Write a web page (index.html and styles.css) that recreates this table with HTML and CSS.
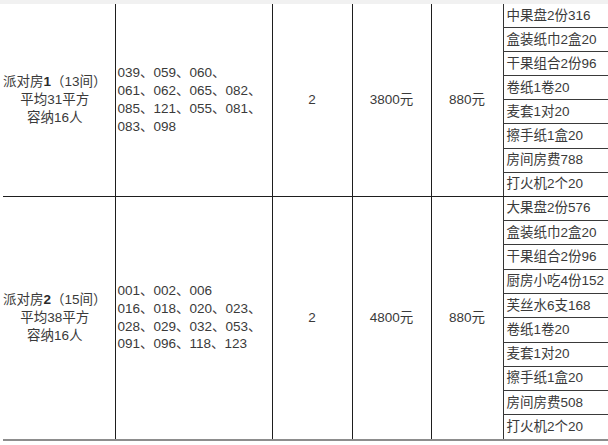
FILE: index.html
```html
<!DOCTYPE html>
<html lang="zh-CN">
<head>
<meta charset="utf-8">
<title>派对房</title>
<link rel="stylesheet" href="styles.css">
</head>
<body>
<div class="strip"></div>
<table class="rooms">
  <colgroup>
    <col class="w1"><col class="w2"><col class="w3"><col class="w4"><col class="w5"><col class="w6">
  </colgroup>
  <tbody class="sec sec1">
    <tr>
      <td rowspan="8" class="name">派对房<b>1</b>（13间）<br>平均31平方<br>容纳16人</td>
      <td rowspan="8" class="nums">039、059、060、<br>061、062、065、082、<br>085、121、055、081、<br>083、098</td>
      <td rowspan="8" class="mid">2</td>
      <td rowspan="8" class="mid">3800元</td>
      <td rowspan="8" class="mid">880元</td>
      <td class="item">中果盘2份316</td>
    </tr>
    <tr><td class="item">盒装纸巾2盒20</td></tr>
    <tr><td class="item">干果组合2份96</td></tr>
    <tr><td class="item">卷纸1卷20</td></tr>
    <tr><td class="item">麦套1对20</td></tr>
    <tr><td class="item">擦手纸1盒20</td></tr>
    <tr><td class="item">房间房费788</td></tr>
    <tr><td class="item last">打火机2个20</td></tr>
  </tbody>
  <tbody class="sec sec2">
    <tr>
      <td rowspan="10" class="name">派对房<b>2</b>（15间）<br>平均38平方<br>容纳16人</td>
      <td rowspan="10" class="nums">001、002、006<br>016、018、020、023、<br>028、029、032、053、<br>091、096、118、123</td>
      <td rowspan="10" class="mid">2</td>
      <td rowspan="10" class="mid">4800元</td>
      <td rowspan="10" class="mid">880元</td>
      <td class="item">大果盘2份576</td>
    </tr>
    <tr><td class="item">盒装纸巾2盒20</td></tr>
    <tr><td class="item">干果组合2份96</td></tr>
    <tr><td class="item">厨房小吃4份152</td></tr>
    <tr><td class="item">芙丝水6支168</td></tr>
    <tr><td class="item">卷纸1卷20</td></tr>
    <tr><td class="item">麦套1对20</td></tr>
    <tr><td class="item">擦手纸1盒20</td></tr>
    <tr><td class="item">房间房费508</td></tr>
    <tr><td class="item last">打火机2个20</td></tr>
  </tbody>
</table>
</body>
</html>
```
FILE: styles.css
```css
html, body {
  margin: 0;
  padding: 0;
  background: #fff;
  overflow: hidden;
  width: 608px;
  height: 445px;
}
body {
  font-family: "Liberation Sans", "Noto Sans CJK SC", sans-serif;
  font-size: 13.5px;
  color: #3a3a3a;
}
.strip {
  height: 4px;
  background: #f1f1f1;
}
.rooms {
  border-collapse: collapse;
  table-layout: fixed;
  width: 605px;
  margin-left: 3px;
}
.w1 { width: 112px; }
.w2 { width: 157px; }
.w3 { width: 80px; }
.w4 { width: 79px; }
.w5 { width: 72px; }
.w6 { width: 105px; }
.rooms td {
  padding: 0;
  border-left: 1px solid #1e1e1e;
  line-height: 17.7px;
}
.rooms td.name {
  border-left: none;
  text-align: center;
  padding-right: 8px;
  white-space: nowrap;
}
.rooms td.name b {
  font-weight: bold;
  color: #2a2a2a;
}
.rooms td.nums {
  text-align: left;
  padding-left: 2px;
  white-space: nowrap;
}
.rooms td.mid {
  text-align: center;
}
.rooms td.item {
  height: 23.1px;
  padding: 0 0 0 3px;
  border-left: 1px solid #333;
  border-bottom: 1px solid #3a3a3a;
  white-space: nowrap;
  overflow: hidden;
  line-height: 22px;
}
.sec2 td.item {
  height: 23.3px;
}
.sec1 td[rowspan] {
  border-bottom: 1px solid #1e1e1e;
}
.sec1 td.item.last {
  border-bottom: 1px solid #1e1e1e;
}
.sec2 td[rowspan],
.sec2 td.item.last {
  border-bottom: 2px solid #8d8d8d;
}
```
